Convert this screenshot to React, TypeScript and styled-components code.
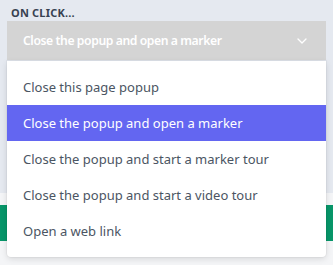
import React from 'react';
import styled, { createGlobalStyle } from 'styled-components';

const options = [
    'Close this page popup',
    'Close the popup and open a marker',
    'Close the popup and start a marker tour',
    'Close the popup and start a video tour',
    'Open a web link',
];
const selected = 1;

const GlobalStyle = createGlobalStyle`
    html, body {
        margin: 0;
        padding: 0;
        background: #f4f5f7;
        font-family: 'Noto Sans', 'Open Sans', sans-serif;
    }
`;

const Page = styled.div`
    position: relative;
    width: 333px;
    height: 265px;
    overflow: hidden;
`;

const Field = styled.div`
    background: #e5e9f0;
    height: 193px;
    padding: 5px 7px 0;
    box-sizing: border-box;
`;

const Label = styled.div`
    color: #374151;
    font-size: 11px;
    font-weight: 700;
    letter-spacing: 0.2px;
    padding-left: 4px;
    height: 16px;
    line-height: 15px;
`;

const Select = styled.div`
    height: 39px;
    background: #d4d4d4;
    display: flex;
    align-items: center;
    justify-content: space-between;
    padding: 0 18px 0 16px;
    color: #ffffff;
    font-size: 12.2px;
    font-weight: 600;
    letter-spacing: -0.42px;
`;

const Footer = styled.div`
    padding-top: 12px;
`;

const GreenButton = styled.div`
    height: 36px;
    background: #079669;
`;

const Menu = styled.ul`
    position: absolute;
    left: 7px;
    top: 61px;
    width: 319px;
    margin: 0;
    padding: 8px 0;
    list-style: none;
    background: #ffffff;
    border-radius: 0 0 4px 4px;
    box-shadow: 0 2px 6px rgba(0, 0, 0, 0.12), 0 0 0 1px rgba(0, 0, 0, 0.03);
`;

const Item = styled.li<{ active: boolean }>`
    height: 36px;
    display: flex;
    align-items: center;
    padding-left: 16px;
    font-size: 13px;
    color: ${({ active }) => (active ? '#ffffff' : '#4b5563')};
    background: ${({ active }) => (active ? '#6366f1' : 'transparent')};
`;

const Chevron = () => (
    <svg width="12" height="12" viewBox="0 0 12 12" fill="none">
        <path d="M2 4l4 4 4-4" stroke="#ffffff" strokeWidth="1.3" strokeLinecap="round" strokeLinejoin="round" />
    </svg>
);

export default function App() {
    return (
        <Page>
            <GlobalStyle />
            <Field>
                <Label>ON CLICK...</Label>
                <Select>
                    <span>{options[selected]}</span>
                    <Chevron />
                </Select>
            </Field>
            <Footer>
                <GreenButton />
            </Footer>
            <Menu>
                {options.map((o, i) => (
                    <Item key={o} active={i === selected}>
                        {o}
                    </Item>
                ))}
            </Menu>
        </Page>
    );
}
